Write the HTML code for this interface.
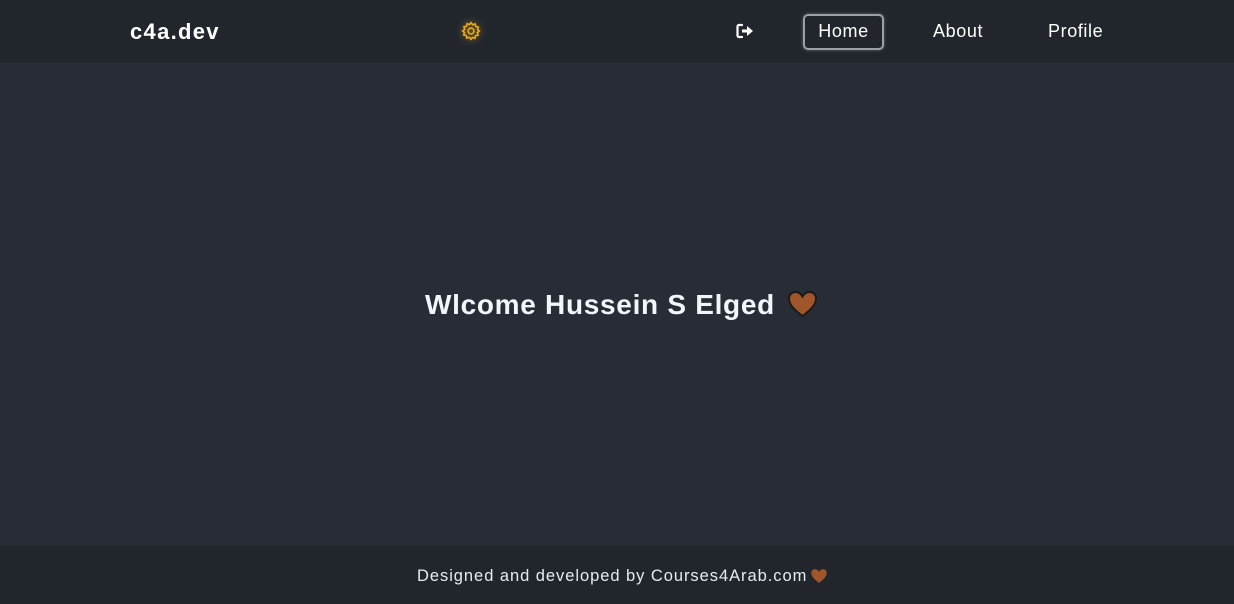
<!DOCTYPE html>
<html><head><meta charset="utf-8"><style>
*{margin:0;padding:0;box-sizing:border-box}
body{width:1234px;height:604px;background:#282c34;font-family:"Liberation Sans",sans-serif;color:#fff;position:relative;overflow:hidden}
header{position:absolute;top:0;left:0;width:1234px;height:63px;background:#21262d}
.logo{position:absolute;left:130px;top:19px;font-size:22px;font-weight:bold;letter-spacing:1.3px}
.gear{position:absolute;left:461px;top:21px;width:20px;height:20px;filter:drop-shadow(0 0 4px rgba(230,170,20,.6))}
.out{position:absolute;left:736px;top:23px}
.nav a{position:absolute;top:14px;font-size:18px;color:#fff;text-decoration:none;line-height:35px;letter-spacing:0.6px}
.home{left:803px;width:81px;height:36px;border:2px solid #9aa0a8;border-radius:5px;text-align:center;line-height:31px!important;box-shadow:0 0 3px rgba(255,255,255,.3)}
main{position:absolute;top:289px;left:425px;font-size:28px;font-weight:bold;color:#f0f6fb;letter-spacing:0.7px;white-space:nowrap}
.heart{position:absolute;left:787px;top:290px}
footer{position:absolute;top:546px;left:0;width:1234px;height:58px;background:#21262d;font-size:16.5px;color:#e6ebf0;letter-spacing:0.95px}
footer span{position:absolute;left:417px;top:21px;white-space:nowrap}
.fh{position:absolute;left:810px;top:568px}
</style></head><body>
<header>
<div class="logo">c4a.dev</div>
<svg class="gear" viewBox="0 0 24 24" fill="none" stroke="#e8a917" stroke-width="2"><path d="M12 2l2 2.5 3-1 .7 3.1 3.1.7-1 3L22 12l-2.5 2 1 3-3.1.7-.7 3.1-3-1L12 22l-2-2.5-3 1-.7-3.1-3.1-.7 1-3L2 12l2.5-2-1-3 3.1-.7.7-3.1 3 1z"/><circle cx="12" cy="12" r="3.5"/></svg>
<svg class="out" width="18" height="16" viewBox="0 0 18 16"><path d="M6 2H3a1.5 1.5 0 0 0-1.5 1.5v9A1.5 1.5 0 0 0 3 14h3" stroke="#fff" stroke-width="2.2" fill="none" stroke-linecap="round"/><path d="M6 6.5h5V3l6 5-6 5V9.5H6z" fill="#fff"/></svg>
<div class="nav"><a class="home">Home</a><a style="left:933px">About</a><a style="left:1048px">Profile</a></div>
</header>
<main>Wlcome Hussein S Elged</main>
<svg class="heart" width="31" height="28" viewBox="0 0 31 28"><path d="M15.5 26C6 19 2 14 2 8.5 2 4.5 5 2 8.5 2c3 0 5.5 2 7 4.5C17 4 19.5 2 22.5 2 26 2 29 4.5 29 8.5 29 14 25 19 15.5 26z" fill="#a0552a" stroke="#1a1a1a" stroke-width="2"/></svg>
<footer><span>Designed and developed by Courses4Arab.com</span></footer>
<svg class="fh" width="18" height="16" viewBox="0 0 31 28"><path d="M15.5 26C6 19 2 14 2 8.5 2 4.5 5 2 8.5 2c3 0 5.5 2 7 4.5C17 4 19.5 2 22.5 2 26 2 29 4.5 29 8.5 29 14 25 19 15.5 26z" fill="#a0552a"/></svg>
</body></html>
